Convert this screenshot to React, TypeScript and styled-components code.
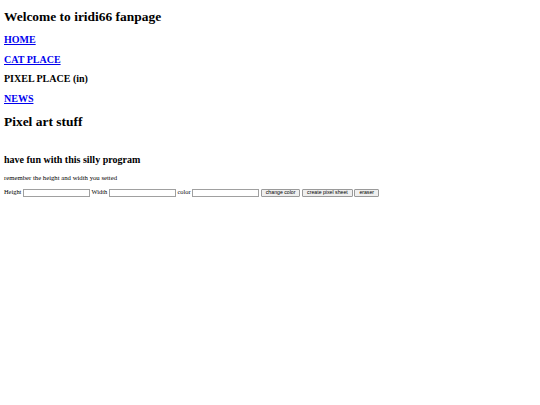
import styled, { createGlobalStyle } from "styled-components";

// the reference is a plain default-styled page shown at half size,
// so everything below is written at 2x and the html is zoomed to 0.5
const GlobalStyle = createGlobalStyle`
  html {
    zoom: 0.5;
    background: #fff;
  }
  body {
    margin: 0;
    font-family: "Liberation Serif", "Times New Roman", serif;
    color: #000;
  }
`;

const Page = styled.div`
  display: flex;
  flex-direction: column;
  align-items: flex-start;
  padding: 20.7px 8px 0;
`;

const Title = styled.h2<{ $top?: number }>`
  font-size: 26.9px;
  line-height: 1;
  font-weight: bold;
  margin: ${(p) => p.$top ?? 0}px 0 0;
`;

const NavItem = styled.h3<{ $top: number }>`
  font-size: 20px;
  line-height: 1;
  font-weight: bold;
  margin: ${(p) => p.$top}px 0 0;

  a {
    color: #0000ee;
    text-decoration: underline;
  }
`;

const Note = styled.p`
  font-size: 13.45px;
  line-height: 1;
  margin: 19px 0 0;
`;

const Controls = styled.div`
  margin-top: 13.8px;
  font-size: 12.8px;
  line-height: 16px;
  white-space: nowrap;
`;

const Field = styled.input`
  box-sizing: border-box;
  width: 134px;
  height: 16px;
  margin: 0;
  padding: 0 2px;
  vertical-align: middle;
  font-family: "Liberation Sans", Arial, sans-serif;
  font-size: 10px;
  background: #fff;
  border: 1px solid #a0a0a0;
  border-radius: 0;
`;

const Button = styled.button`
  box-sizing: border-box;
  height: 16px;
  margin: 0;
  padding: 0 8px;
  vertical-align: middle;
  font-family: "Liberation Sans", Arial, sans-serif;
  font-size: 10.4px;
  line-height: 1;
  color: #000;
  background: #efefef;
  border: 1px solid #9a9a9a;
  border-radius: 2px;
`;

export default function App() {
  return (
    <Page>
      <GlobalStyle />
      <Title>Welcome to iridi66 fanpage</Title>
      <NavItem $top={23.3}>
        <a href="#">HOME</a>
      </NavItem>
      <NavItem $top={19.3}>
        <a href="#">CAT PLACE</a>
      </NavItem>
      <NavItem $top={18.8}>PIXEL PLACE (in)</NavItem>
      <NavItem $top={19.3}>
        <a href="#">NEWS</a>
      </NavItem>
      <Title $top={22.5}>Pixel art stuff</Title>
      <NavItem $top={52.7}>have fun with this silly program</NavItem>
      <Note>remember the height and width you setted</Note>
      <Controls>
        Height <Field type="text" /> Width <Field type="text" /> color{" "}
        <Field type="text" /> <Button>change color</Button>{" "}
        <Button>create pixel sheet</Button> <Button>eraser</Button>
      </Controls>
    </Page>
  );
}
